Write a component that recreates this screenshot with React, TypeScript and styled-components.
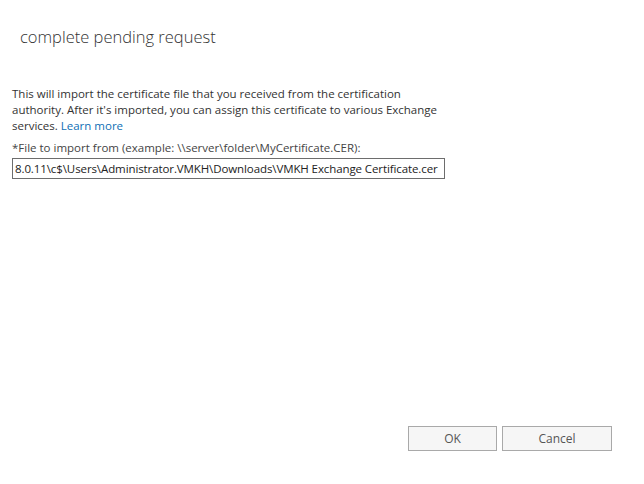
import styled, { createGlobalStyle } from "styled-components";

const GlobalStyle = createGlobalStyle`
  html, body {
    margin: 0;
    padding: 0;
    background: #ffffff;
  }
  body {
    font-family: "Segoe UI", "Open Sans", "Noto Sans", sans-serif;
  }
`;

const Page = styled.div`
  width: 644px;
  height: 484px;
  display: flex;
  flex-direction: column;
  box-sizing: border-box;
  padding: 24px 0 0 12px;
  color: #444444;
`;

const Title = styled.h1`
  margin: 0 0 0 8px;
  font-size: 16.5px;
  font-weight: 300;
  color: #333333;
  line-height: 26px;
`;

const Body = styled.div`
  margin-top: 36px;
  width: 428px;
  font-size: 11.5px;
  line-height: 16px;
  color: #333333;
`;

const Link = styled.a`
  color: #0f6fb5;
  text-decoration: none;
`;

const Label = styled.div`
  margin-top: 6px;
  font-size: 11.5px;
  line-height: 16px;
  color: #444444;
`;

const PathBox = styled.div`
  margin-top: 2px;
  width: 433px;
  height: 21px;
  box-sizing: border-box;
  border: 1px solid #6d6d6d;
  display: flex;
  align-items: center;
  overflow: hidden;
  padding: 0 2px;
  white-space: nowrap;
  font-size: 11.5px;
  letter-spacing: -0.1px;
  color: #222222;
`;

const Footer = styled.div`
  margin-top: auto;
  display: flex;
  justify-content: flex-end;
  gap: 5px;
  padding: 0 32px 33px 0;
`;

const Button = styled.button<{ $w: number }>`
  width: ${(p) => p.$w}px;
  height: 25px;
  background: #f6f6f6;
  border: 1px solid #a9a9a9;
  font-family: inherit;
  font-size: 12px;
  color: #555555;
  padding: 0;
`;

export default function App() {
  return (
    <>
      <GlobalStyle />
      <Page>
        <Title>complete pending request</Title>
        <Body>
          This will import the certificate file that you received from the certification
          authority. After it's imported, you can assign this certificate to various Exchange
          services. <Link href="#">Learn more</Link>
        </Body>
        <Label>*File to import from (example: \\server\folder\MyCertificate.CER):</Label>
        <PathBox>8.0.11\c$\Users\Administrator.VMKH\Downloads\VMKH Exchange Certificate.cer</PathBox>
        <Footer>
          <Button $w={89}>OK</Button>
          <Button $w={110}>Cancel</Button>
        </Footer>
      </Page>
    </>
  );
}
